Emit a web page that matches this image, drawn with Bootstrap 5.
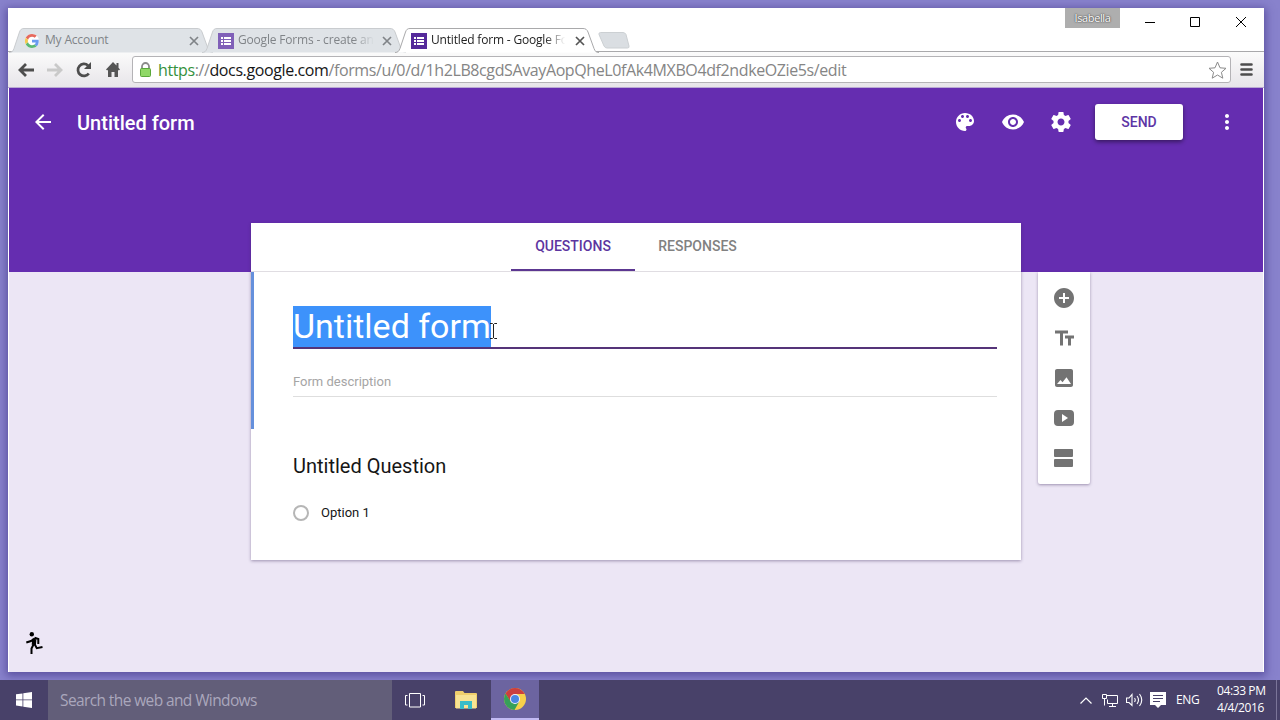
<!DOCTYPE html>
<html lang="en">
<head>
<meta charset="utf-8">
<title>Untitled form - Google Forms</title>
<meta name="viewport" content="width=device-width, initial-scale=1">
<link href="https://cdn.jsdelivr.net/npm/bootstrap@5.3.0/dist/css/bootstrap.min.css" rel="stylesheet">
<style>
:root{--ui:"Open Sans","Noto Sans",sans-serif;--purple:#652db0}
body{width:1280px;height:720px;overflow:hidden;background:#8882cc;font-family:Roboto,sans-serif;line-height:1}
svg{display:block;flex:none}
button{font-family:inherit}
.desktop{height:680px;padding:8px 16px 8px 8px}
.browser{height:664px;background:#fff;box-shadow:0 2px 8px 2px rgba(50,35,120,.5)}
.ui-font{font-family:var(--ui);white-space:nowrap}
.titlebar{height:44px;border-bottom:1px solid #a9a9ab}
.tabstrip{padding-left:1px;height:44px}
.btab{width:204px;height:25px;margin-right:-11px;padding:0 14px 0 16px;font-size:12px;color:#808488;margin-bottom:-1px}
.btab>.shape{position:absolute;left:0;top:0;z-index:0}
.btab>:not(.shape){position:relative;z-index:1}
.btab .label{line-height:18px;margin-top:-2px;letter-spacing:-.18px}
.btab.front{z-index:2;color:#222}
.fade-end{-webkit-mask-image:linear-gradient(90deg,#000 83%,transparent 98%)}
.newtab{margin:0 0 3px 10px}
.user{height:20px;width:55px;background:#aeaeae;color:#fff;font-size:11px;line-height:20px;text-shadow:0 0 2px #444,0 0 1px #444;letter-spacing:-.4px}
.winctl{padding:8px 17px 0 24px}
.toolbar{height:36px;background:linear-gradient(#fbfbfb,#e7e5e9);border-bottom:1px solid #b9a9d3;padding:0 11px 0 10px}
.omnibox{height:27px;border:1px solid #b4b3b6;border-radius:3px;background:#fff;padding:0 3px 0 6px;font-size:16px;letter-spacing:-.39px;color:#858585}
.page{height:584px;background:#ece6f5;margin:0 1px}
.hero{height:184px;background:var(--purple);color:#fff}
.appbar{height:68px;padding:0 24px 0 22px}
.doc-title{font-size:20px;font-weight:500;margin-left:22px;padding-top:2px}
.send{width:88px;height:36px;border-radius:3px;background:#fff;color:#5d35a5;font-size:14px;font-weight:500;box-shadow:0 2px 4px rgba(0,0,0,.45);border:0;padding:0 0 1px}
.workarea{margin-top:-49px;padding-left:242px;gap:17px}
.sheet{width:770px;height:337px;background:#fff;box-shadow:0 1px 3px rgba(60,40,90,.45)}
.tabs-row{height:49px;border-bottom:1px solid #e0dde2;font-size:14px;font-weight:500;color:#818181;padding-right:2px}
.tabs-row>div{width:124px;height:48px;padding:0 0 2px 1px}
.tabs-row>.on{color:#5d35a0;border-bottom:2px solid #5c3791;padding:0}
.intro{height:157px;border-left:3px solid #6590dc;padding:34px 24px 0 39px}
.name-field{height:43px;border-bottom:2px solid #553479}
.name-field .sel{background:#3d92fb;color:#fff;font-size:34px;height:41px;line-height:41px;width:198px;white-space:nowrap}
.desc-field{height:48px;border-bottom:1px solid #dedede;color:#a5a5a5;font-size:13px;padding-top:26px}
.question{padding:27px 42px 0}
.question h2{font-size:20px;font-weight:400;line-height:20px;color:#161616;margin:0}
.option{margin-top:29px;gap:12px;font-size:13px;color:#161616}
.option span:last-child{padding-bottom:2px}
.radio{width:16px;height:16px;border:2px solid #b6b6b6;border-radius:50%}
.rail{margin-top:49px;width:52px;height:212px;background:#fff;border-radius:0 0 2px 2px;box-shadow:0 1px 3px rgba(60,40,90,.45);padding-top:14px;gap:16px;fill:#737373}
.ibeam{position:absolute;left:197px;top:17px}
.runner{position:absolute;left:17px;bottom:17px}
.taskbar{height:40px;background:#484169;color:#fff}
.start{width:48px}
.search{width:344px;background:#625e79;color:#aaa7bc;font-size:15.500px;letter-spacing:-.61px;padding:2px 0 0 12px}
.task{width:49px}
.task.active{width:48px;background:#6c64a0;border-bottom:2px solid #c3bbf4}
.tray{font-size:12px;letter-spacing:-.4px}
.edge{height:40px;width:4px;border-left:1px solid #7b7599}
</style>
</head>
<body>
<svg width="0" height="0" class="position-absolute"><defs>
<symbol id="x" viewBox="0 0 10 10"><path d="M1 1l8 8M9 1L1 9" stroke="currentColor" stroke-width="1.7" fill="none"/></symbol>
<symbol id="forms" viewBox="0 0 16 16"><path d="M0 0h16v16H0z" fill="currentColor"/><path d="M3 4h2v2H3zM6 4h7v2H6zM3 7h2v2H3zM6 7h7v2H6zM3 10h2v2H3zM6 10h7v2H6z" fill="#fff"/></symbol>
<symbol id="tabshape" viewBox="0 0 204 25"><path d="M0 24.5C3 24.500 4 23 5 20.500L10.500 4C11.500 1.500 12.500.500 15 .500H188C190.500.500 192 1.500 193 4L199 20.500C200 23 201 24.500 204 24.500"/></symbol>
</defs></svg>

<div class="desktop">
<div class="browser">
  <div class="titlebar d-flex">
    <div class="tabstrip d-flex align-items-end flex-grow-1 ui-font">
      <div class="btab position-relative d-flex align-items-center">
        <svg class="shape" width="204" height="25" fill="#dfe3e7" stroke="#c9cccf"><use href="#tabshape"/></svg>
        <svg width="14" height="14" viewBox="0 0 48 48"><circle cx="24" cy="24" r="24" fill="#fff"/><path fill="#e66a5e" d="M24 9.500c3.500 0 6.700 1.200 9.200 3.600l6.900-6.900C35.900 2.400 30.500 0 24 0 14.600 0 6.500 5.400 2.600 13.200l8 6.200C12.400 13.700 17.700 9.500 24 9.500z"/><path fill="#6a9bf0" d="M47 24.500c0-1.600-.2-3.100-.4-4.500H24v9h12.900c-.6 3-2.300 5.500-4.800 7.200l7.700 6C44.400 38 47 31.800 47 24.500z"/><path fill="#f4c94f" d="M10.500 28.600a14 14 0 010-9.200l-8-6.200a24 24 0 000 21.600z"/><path fill="#5bb974" d="M24 48c6.500 0 11.900-2.100 15.900-5.800l-7.700-6c-2.200 1.400-4.900 2.300-8.200 2.300-6.300 0-11.600-4.200-13.500-9.900l-8 6.200C6.500 42.600 14.600 48 24 48z"/></svg>
        <div class="label flex-grow-1" style="margin-left:6px">My Account</div>
        <svg width="10" height="10"><use href="#x"/></svg>
      </div>
      <div class="btab position-relative d-flex align-items-center">
        <svg class="shape" width="204" height="25" fill="#dfe3e7" stroke="#c9cccf"><use href="#tabshape"/></svg>
        <svg width="16" height="16" color="#8060b8"><use href="#forms"/></svg>
        <div class="label ms-1"><span class="d-inline-block fade-end">Google Forms - create ani</span></div>
        <svg width="10" height="10" class="ms-auto"><use href="#x"/></svg>
      </div>
      <div class="btab front position-relative d-flex align-items-center">
        <svg class="shape" width="204" height="25" fill="#fff" stroke="#a9a9ab"><use href="#tabshape"/></svg>
        <svg width="16" height="16" color="#552a9b"><use href="#forms"/></svg>
        <div class="label ms-1"><span class="d-inline-block fade-end">Untitled form - Google Fo</span></div>
        <svg width="10" height="10" class="ms-auto" color="#555"><use href="#x"/></svg>
      </div>
      <svg class="newtab" width="33" height="17" fill="#dadee2" stroke="#ccd0d3"><path d="M2.500.500H25Q27 .500 28 2.500L31 14Q31.500 16 29.500 16H9Q7 16 6 14L1 2.500Q.500.500 2.500.500z"/></svg>
    </div>
    <div class="user ui-font text-center">Isabella</div>
    <div class="winctl d-flex" >
      <svg width="12" height="12" stroke="#000"><path d="M1 6.500h10"/></svg>
      <svg width="12" height="12" stroke="#000" fill="none" style="margin:0 34px 0 33px"><path d="M1.500 1.500h9v9h-9z"/></svg>
      <svg width="12" height="12" stroke="#000"><path d="M1 1l10 10M11 1L1 11"/></svg>
    </div>
  </div>

  <div class="toolbar d-flex align-items-center ui-font">
    <svg width="17" height="14" stroke="#4d4d4d" stroke-width="2.800" fill="none"><path d="M8 1L2 7l6 6M2 7h14"/></svg>
    <svg class="ms-2 ps-1" width="21" height="14" stroke="#c9c9c9" stroke-width="2.800" fill="none"><path d="M8 1l6 6-6 6M14 7H0"/></svg>
    <svg width="16" height="16" style="margin-left:12px" viewBox="0 0 16 16"><path d="M12.800 11.500A6 6 0 1 1 12 3.500" stroke="#4d4d4d" stroke-width="2.700" fill="none"/><path d="M15 0v7H8z" fill="#4d4d4d"/></svg>
    <svg width="14" height="15" style="margin-left:14px" viewBox="0 0 14 15" fill="#555"><path d="M7 0L0 7.500 1.200 8.500 2 7.800V15H5.500V10h3v5H12V7.800l.8.700L14 7.500 12.500 5.800V1h-2v2.500z"/></svg>
    <div class="omnibox d-flex align-items-center flex-grow-1" style="margin:0 9px 0 12px">
      <svg width="13" height="16" viewBox="0 0 13 16"><path d="M3 8V4.500a3.500 3.500 0 017 0V8" fill="none" stroke="#8b8b8b" stroke-width="1.800"/><rect x="1.500" y="6.500" width="10" height="8" rx="1" fill="#8fd866" stroke="#5aa83a"/></svg>
      <div class="flex-grow-1" style="margin-left:6px"><span style="color:#35913c">https</span>://<span style="color:#161616">docs.google.com</span>/forms/u/0/d/1h2LB8cgdSAvayAopQheL0fAk4MXBO4df2ndkeOZie5s/edit</div>
      <svg width="19" height="18" viewBox="0 0 19 18" fill="#fff" stroke="#8a8a8a" stroke-linejoin="round"><path d="M9.500 1l2.500 5.800 6 .5-4.600 4 1.400 5.900-5.300-3.200-5.300 3.200 1.400-5.900L1 7.300l6-.5z"/></svg>
    </div>
    <svg width="13" height="13" stroke="#4d4d4d" stroke-width="2.600" stroke-linecap="round"><path d="M1.500 1.500h10M1.500 6.500h10M1.500 11.500h10"/></svg>
  </div>

  <main class="page position-relative">
    <header class="hero">
      <div class="appbar d-flex align-items-center">
        <svg width="24" height="24" fill="#fff"><path d="M20 11H7.830l5.590-5.590L12 4l-8 8 8 8 1.410-1.410L7.830 13H20v-2z"/></svg>
        <div class="doc-title flex-grow-1">Untitled form</div>
        <div class="d-flex align-items-center gap-4">
          <svg width="24" height="24" fill="#fff"><path d="M12 3c-4.970 0-9 4.030-9 9s4.030 9 9 9c.83 0 1.500-.67 1.500-1.500 0-.39-.15-.74-.39-1.010-.23-.26-.38-.61-.38-.99 0-.83.67-1.500 1.500-1.500H16c2.760 0 5-2.240 5-5 0-4.420-4.030-8-9-8zm-5.500 9c-.83 0-1.500-.67-1.500-1.500S5.670 9 6.500 9 8 9.670 8 10.500 7.330 12 6.500 12zm3-4C8.670 8 8 7.330 8 6.500S8.670 5 9.500 5s1.500.67 1.500 1.500S10.330 8 9.500 8zm5 0c-.83 0-1.500-.67-1.500-1.500S13.670 5 14.500 5s1.500.67 1.500 1.500S15.330 8 14.500 8zm3 4c-.83 0-1.500-.67-1.500-1.500S16.670 9 17.500 9s1.500.67 1.500 1.500-.67 1.500-1.500 1.500z"/></svg>
          <svg width="24" height="24" fill="#fff"><path d="M12 4.500C7 4.500 2.730 7.610 1 12c1.730 4.390 6 7.500 11 7.500s9.270-3.110 11-7.500c-1.730-4.390-6-7.500-11-7.500zM12 17c-2.760 0-5-2.240-5-5s2.240-5 5-5 5 2.240 5 5-2.240 5-5 5zm0-8c-1.660 0-3 1.340-3 3s1.340 3 3 3 3-1.340 3-3-1.340-3-3-3z"/></svg>
          <svg width="24" height="24" fill="#fff"><path d="M19.430 12.980c.04-.32.07-.64.07-.98s-.03-.66-.07-.98l2.110-1.650c.19-.15.24-.42.12-.64l-2-3.460c-.12-.22-.39-.3-.61-.22l-2.490 1c-.52-.4-1.080-.73-1.690-.98l-.38-2.650C14.460 2.180 14.250 2 14 2h-4c-.25 0-.46.18-.49.42l-.38 2.650c-.61.25-1.170.59-1.690.98l-2.490-1c-.23-.09-.49 0-.61.22l-2 3.460c-.13.22-.07.49.12.64l2.110 1.650c-.04.32-.07.65-.07.98s.03.66.07.98l-2.110 1.650c-.19.15-.24.42-.12.64l2 3.460c.12.22.39.3.61.22l2.490-1c.52.4 1.080.73 1.690.98l.38 2.650c.03.24.24.42.49.42h4c.25 0 .46-.18.49-.42l.38-2.650c.61-.25 1.170-.59 1.690-.98l2.490 1c.23.09.49 0 .61-.22l2-3.460c.12-.22.07-.49-.12-.64l-2.110-1.650zM12 15.500c-1.930 0-3.500-1.570-3.500-3.500s1.570-3.500 3.500-3.500 3.500 1.570 3.500 3.500-1.570 3.500-3.500 3.500z"/></svg>
        </div>
        <button class="send" style="margin:0 32px 0 22px">SEND</button>
        <svg width="24" height="24" fill="#fff"><path d="M12 8c1.100 0 2-.9 2-2s-.9-2-2-2-2 .9-2 2 .9 2 2 2zm0 2c-1.100 0-2 .9-2 2s.9 2 2 2 2-.9 2-2-.9-2-2-2zm0 6c-1.100 0-2 .9-2 2s.9 2 2 2 2-.9 2-2-.9-2-2-2z"/></svg>
      </div>
    </header>

    <div class="workarea d-flex align-items-start">
      <section class="sheet">
        <div class="tabs-row d-flex justify-content-center">
          <div class="on d-flex align-items-center justify-content-center">QUESTIONS</div>
          <div class="d-flex align-items-center justify-content-center">RESPONSES</div>
        </div>
        <div class="intro">
          <div class="name-field position-relative"><div class="sel">Untitled form</div>
            <svg class="ibeam" width="7" height="16" stroke="#222" fill="none"><path d="M0 .500h2.500l1 1 1-1H7M3.500 1v14M0 15.500h2.500l1-1 1 1H7"/></svg>
          </div>
          <div class="desc-field">Form description</div>
        </div>
        <div class="question">
          <h2>Untitled Question</h2>
          <div class="option d-flex align-items-center"><span class="radio"></span><span>Option 1</span></div>
        </div>
      </section>
      <aside class="rail d-flex flex-column align-items-center">
        <svg width="24" height="24"><path d="M12 2C6.480 2 2 6.480 2 12s4.480 10 10 10 10-4.480 10-10S17.520 2 12 2zm5 11h-4v4h-2v-4H7v-2h4V7h2v4h4v2z"/></svg>
        <svg width="24" height="24"><path d="M3 4.500v3h5v12h3v-12h5v-3H3zm19 5h-9v3h3v7h3v-7h3v-3z"/></svg>
        <svg width="24" height="24"><path d="M21 19V5c0-1.100-.9-2-2-2H5c-1.100 0-2 .9-2 2v14c0 1.100.9 2 2 2h14c1.100 0 2-.9 2-2zM5 18l3.500-4 2 2.200 4-5 4.500 6.800z" fill-rule="evenodd"/></svg>
        <svg width="24" height="24"><path d="M6 4h12q4 0 4 4v8q0 4-4 4H6q-4 0-4-4V8q0-4 4-4zM10 8v8l6-4z" fill-rule="evenodd"/></svg>
        <svg width="24" height="24"><path d="M3 3h17q1 0 1 1v6q0 1-1 1H3q-1 0-1-1V4q0-1 1-1zM3 13h17q1 0 1 1v6q0 1-1 1H3q-1 0-1-1v-6q0-1 1-1z"/></svg>
      </aside>
    </div>
    <svg class="runner" width="17" height="24" viewBox="0 0 17 24"><circle cx="5.800" cy="3.200" r="2.200"/><path d="M8.300 8L7.800 14" stroke="#000" stroke-width="4.200"/><path d="M8.500 7.500L5 10 .300 11.500M8.500 6.800l3.800 1.200V13M8.800 13.500l2 3.700 5.700-1.200M7.500 13.500l-2 4V23" stroke="#000" stroke-width="2" fill="none"/></svg>
  </main>
</div>
</div>

<footer class="taskbar d-flex ui-font">
  <div class="start d-flex align-items-center justify-content-center"><svg width="16" height="16" fill="#fff"><path d="M0 2.300L6.500 1.400V7.500H0zM7.300 1.300L16 0v7.500H7.300zM0 8.300h6.500v6.200L0 13.600zM7.300 8.300H16V16l-8.700-1.300z"/></svg></div>
  <div class="search d-flex align-items-center">Search the web and Windows</div>
  <div class="task d-flex align-items-center justify-content-center pe-1"><svg width="20" height="15" fill="none" stroke="#fff"><path d="M4.500.500h11v13.500h-11zM2.500 2.500H.500v9.500h2M17.500 2.500h2v9.500h-2"/></svg></div>
  <div class="task d-flex align-items-center justify-content-center"><svg width="22" height="19" viewBox="0 0 22 19"><path d="M0 1q0-1 1-1h7l1.500 2H21q1 0 1 1v14H0z" fill="#f0cf6c"/><path d="M1 4h20v13.500H1z" fill="#f8e393"/><path d="M5 10h12v8h-4v-4H9v4H5z" fill="#38bcc8"/></svg></div>
  <div class="task active d-flex align-items-center justify-content-center" style="margin-left:1px"><svg width="22" height="22" viewBox="0 0 22 22"><circle cx="11" cy="11" r="11" fill="#f7d04b"/><path d="M1.500 5.500A11 11 0 0120.500 5.500L20.500 6H11L6 13z" fill="#cb3f3e"/><path d="M1.500 5.500L6.700 13.500 15 14 10.500 22A11 11 0 011.500 5.500z" fill="#36a05a"/><circle cx="11" cy="11" r="5" fill="#eef"/><circle cx="11" cy="11" r="4" fill="#4a86e2"/></svg></div>
  <div class="tray d-flex align-items-center ms-auto">
    <svg width="12" height="7" fill="none" stroke="#fff" stroke-width="1.200"><path d="M.500 6.500L6 1l5.500 5.500"/></svg>
    <svg width="17" height="15" style="margin-left:10px" fill="none" stroke="#fff"><path d="M4.500 2.500h11v8h-10v-4M.500 1.500h4v4h-4zM2.500 5.500v7M10.500 10.500v3M7 13.500h7"/></svg>
    <svg width="17" height="14" style="margin-left:7px" fill="none" stroke="#fff" stroke-width="1.100"><path d="M.500 5h2.500l3-3.500v11L3 9.500H.500zM8.500 5q1.500 2 0 4M11 3q3 4 0 8M13.500 1q4.500 6 0 12"/></svg>
    <svg width="16" height="16" style="margin-left:7px"><path d="M0 0h16v13h-5l-3 3-3-3H0z" fill="#fff"/><path d="M3 3.500h10M3 6.500h10M3 9.500h7" stroke="#484169"/></svg>
    <div style="margin-left:10px;width:23px">ENG</div>
    <div class="text-center" style="margin:-2px 12px 0 18px;width:47px;line-height:17px"><div>04:33 PM</div><div>4/4/2016</div></div>
    <div class="edge"></div>
  </div>
</footer>
<script src="https://cdn.jsdelivr.net/npm/bootstrap@5.3.0/dist/js/bootstrap.bundle.min.js"></script>
</body>
</html>
